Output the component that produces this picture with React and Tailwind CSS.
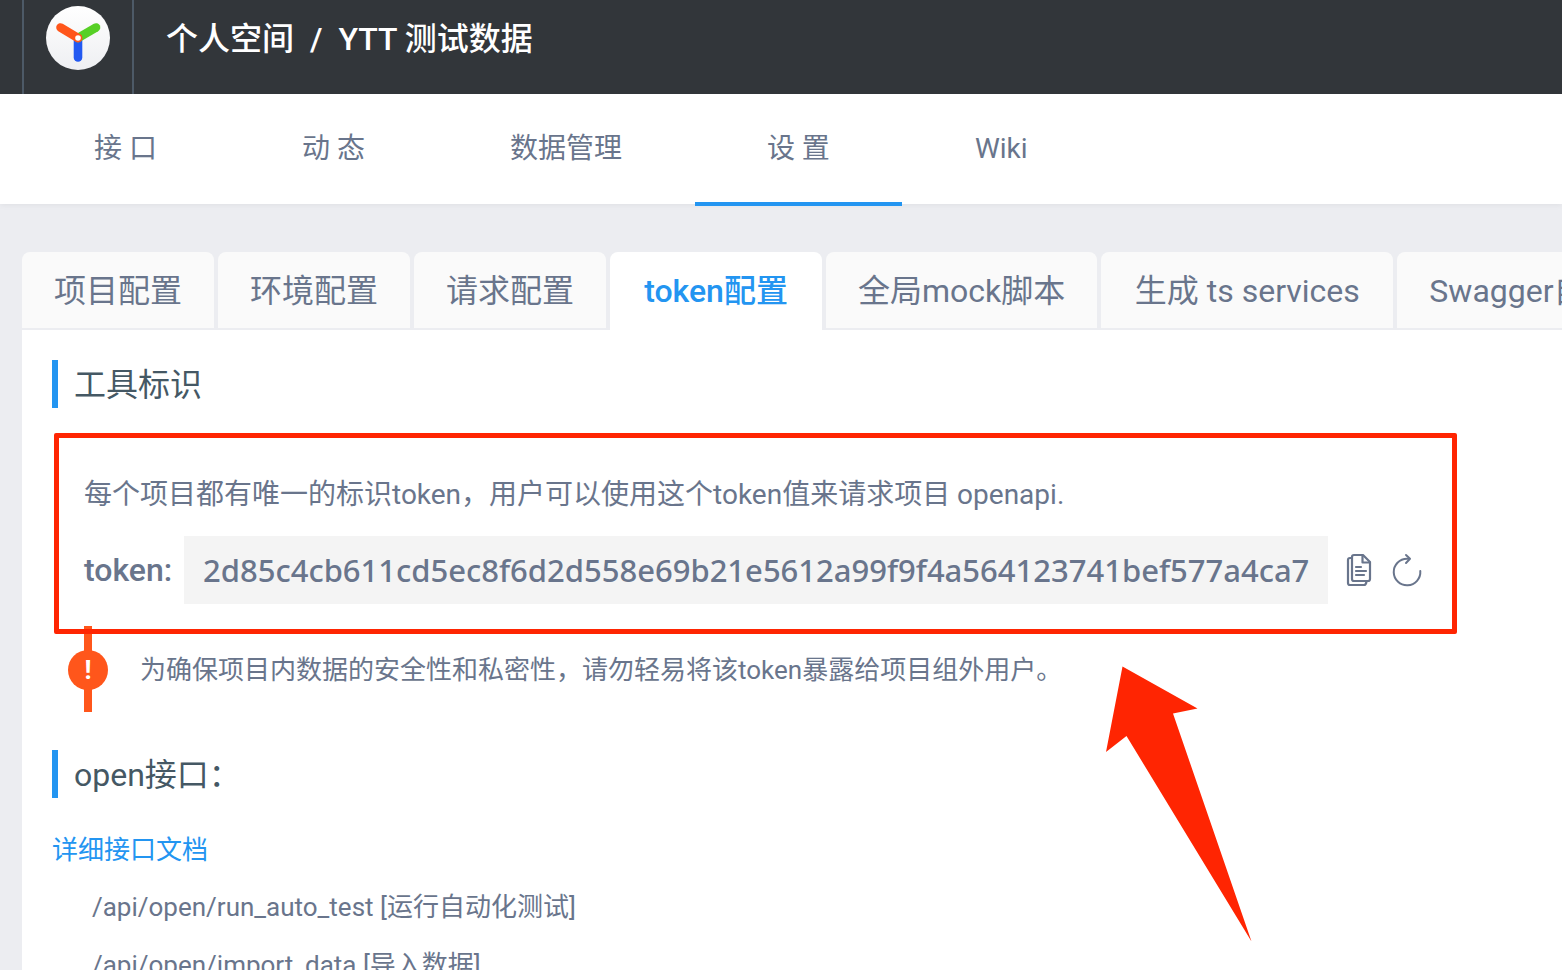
import React from "react";

const NAV = ["接 口", "动 态", "数据管理", "设 置", "Wiki"];
const TABS = [
  { label: "项目配置", width: "min-w-[192px]" },
  { label: "环境配置", width: "min-w-[192px]" },
  { label: "请求配置", width: "min-w-[192px]" },
  { label: "token配置", width: "min-w-[212px]" },
  { label: "全局mock脚本", width: "min-w-[270px]" },
  { label: "生成 ts services", width: "min-w-[292px]" },
  { label: "Swagger自动同步", width: "min-w-[312px]" },
];
const APIS = [
  "/api/open/run_auto_test [运行自动化测试]",
  "/api/open/import_data [导入数据]",
];

function Logo() {
  return (
    <svg viewBox="0 0 64 64" className="size-16" aria-hidden="true">
      <defs>
        <linearGradient id="disc" x1="0" y1="0" x2="0" y2="1">
          <stop offset="0" stopColor="#ffffff" />
          <stop offset="1" stopColor="#eeeff2" />
        </linearGradient>
      </defs>
      <circle cx="32" cy="32" r="32" fill="url(#disc)" />
      <g strokeWidth="8.6" strokeLinecap="round">
        <path d="M32 34V51.5" stroke="#2359f1" />
        <path d="M32 32L50 21.5" stroke="#57d026" />
        <path d="M14.5 21.5L32 32" stroke="#ff561b" />
      </g>
      <circle cx="32" cy="32" r="4.3" fill="#ff561b" />
      <circle cx="32" cy="32" r="2.8" fill="#fff" />
    </svg>
  );
}

function CopyIcon() {
  return (
    <svg viewBox="0 0 26 34" className="h-[34px] w-[26px]" fill="none" stroke="currentColor" strokeWidth="2.2" strokeLinejoin="round" strokeLinecap="round" aria-hidden="true">
      <path d="M8 2H17L24 9V26Q24 28 22 28H8Q6 28 6 26V4Q6 2 8 2Z" />
      <path d="M16.5 2.5V9.5H23.5" />
      <path d="M6 5H4Q2 5 2 7V30Q2 32 4 32H18Q20 32 20.5 28.5" />
      <path d="M10 14H15M10 18H20M10 22H18" />
    </svg>
  );
}

function ReloadIcon() {
  return (
    <svg viewBox="0 0 30 34" className="h-[34px] w-[30px]" fill="none" stroke="currentColor" strokeWidth="2" strokeLinecap="round" aria-hidden="true">
      <path d="M17 5.7H15A13.3 13.3 0 1 0 28.3 18" />
      <path d="M14 2L18 5.7L14 10" strokeLinejoin="round" />
    </svg>
  );
}

function SectionTitle({ children }) {
  return (
    <h2 className="flex h-12 items-center border-l-6 border-[#2395f1] pt-0.5 pl-4 text-[32px] text-[#455864]">
      {children}
    </h2>
  );
}

export default function App() {
  return (
    <div className="flex h-screen flex-col overflow-hidden bg-[#ecedf1] font-['Roboto','Noto_Sans_CJK_SC',sans-serif] text-[#69758c]">
      <header className="flex h-[94px] shrink-0 bg-[#32363a] pl-[22px]">
        <a href="#home" aria-label="首页" className="flex w-28 justify-center border-x-2 border-[#4d5a67] pt-1.5">
          <Logo />
        </a>
        <div className="flex h-[78px] items-center gap-4 pl-8 text-[32px] font-medium text-white">
          <a href="#group">个人空间</a>
          <span>/</span>
          <span>YTT 测试数据</span>
        </div>
      </header>

      <nav className="z-10 flex h-[110px] shrink-0 gap-px bg-white pl-[22px] text-[28px] shadow-[0_1px_6px_rgba(0,0,0,0.06)]">
        {NAV.map((item) => (
          <a
            key={item}
            href="#nav"
            className={
              item === "设 置"
                ? "flex h-28 items-center border-b-4 border-[#2395f1] px-[72px] pt-0.5"
                : "flex h-28 items-center border-b-4 border-transparent px-[72px] pt-0.5"
            }
          >
            {item}
          </a>
        ))}
      </nav>

      <main className="ml-[22px] mt-12 flex min-h-0 grow flex-col">
        <div role="tablist" className="flex h-[78px] shrink-0 gap-1 overflow-hidden text-[32px]">
          {TABS.map(({ label, width }) => (
            <button
              key={label}
              type="button"
              role="tab"
              aria-selected={label === "token配置"}
              className={
                label === "token配置"
                  ? `${width} h-[78px] shrink-0 rounded-t-lg bg-white px-8 font-medium whitespace-nowrap text-[#2395f1]`
                  : `${width} h-[76px] shrink-0 rounded-t-lg bg-[#fafafa] px-8 pt-0.5 whitespace-nowrap`
              }
            >
              {label}
            </button>
          ))}
        </div>

        <div className="relative min-h-0 grow overflow-hidden bg-white pl-[30px] pt-[30px]">
          <SectionTitle>工具标识</SectionTitle>

          <div className="relative z-10 ml-0.5 mt-[25px] w-fit rounded-xs border-[5px] border-[#ff2502] pt-[37px] pr-[30px] pb-[25px] pl-[25px]">
            <p className="text-[28px] leading-10">
              每个项目都有唯一的标识token，用户可以使用这个token值来请求项目 openapi.
            </p>
            <div className="mt-[21px] flex items-center">
              <span className="mr-3 text-[32px] font-medium">token:</span>
              <span className="flex h-[68px] min-w-[1144px] items-center justify-center bg-[#f4f4f4] px-4 font-['Noto_Sans',sans-serif] text-[31px] font-medium">
                2d85c4cb611cd5ec8f6d2d558e69b21e5612a99f9f4a564123741bef577a4ca7
              </span>
              <button type="button" aria-label="复制" className="ml-[18px]">
                <CopyIcon />
              </button>
              <button type="button" aria-label="刷新" className="ml-5">
                <ReloadIcon />
              </button>
            </div>
          </div>

          <div className="-mt-2 ml-4 flex h-[86px] items-center gap-8">
            <div className="flex h-full w-10 justify-center">
              <span className="flex h-full w-2 items-center justify-center bg-[#ff561b] pt-0.5">
                <span className="flex size-10 shrink-0 items-center justify-center rounded-full bg-[#ff561b] text-[26px] font-bold text-white">
                  !
                </span>
              </span>
            </div>
            <p className="pt-0.5 text-[26px]">
              为确保项目内数据的安全性和私密性，请勿轻易将该token暴露给项目组外用户。
            </p>
          </div>

          <div className="mt-[38px]">
            <SectionTitle>open接口：</SectionTitle>
          </div>
          <a href="#doc" className="mt-8 block w-fit text-[26px] leading-10 text-[#2395f1]">
            详细接口文档
          </a>
          <ul className="mt-2 pl-10 text-[26px] leading-[58px]">
            {APIS.map((api) => (
              <li key={api}>{api}</li>
            ))}
          </ul>

          <svg viewBox="0 0 146 276" className="absolute left-[1084px] top-[336px] h-[276px] w-[146px]" aria-hidden="true">
            <path d="M16.5 .5L91.5 42.5L67 47.5L145.5 275.5L20.5 70L0 86Z" fill="#ff2502" />
          </svg>
        </div>
      </main>
    </div>
  );
}
